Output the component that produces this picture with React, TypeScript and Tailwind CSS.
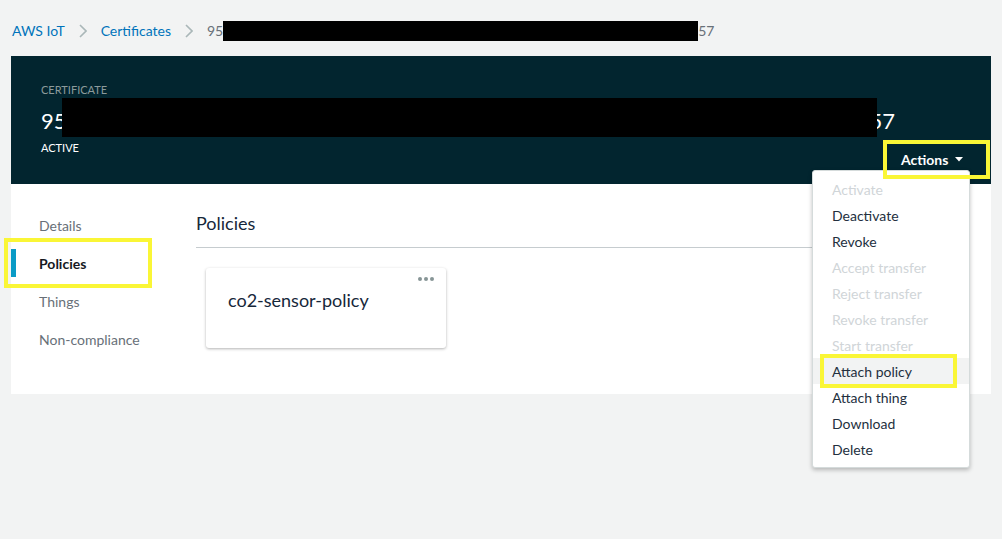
const menuItems = [
  { label: 'Activate', disabled: true },
  { label: 'Deactivate' },
  { label: 'Revoke' },
  { label: 'Accept transfer', disabled: true },
  { label: 'Reject transfer', disabled: true },
  { label: 'Revoke transfer', disabled: true },
  { label: 'Start transfer', disabled: true },
  { label: 'Attach policy', active: true },
  { label: 'Attach thing' },
  { label: 'Download' },
  { label: 'Delete' },
];

const navItems = ['Details', 'Policies', 'Things', 'Non-compliance'];

function Chevron() {
  return (
    <svg width="8" height="14" viewBox="0 0 8 14" className="mx-[14px]">
      <path d="M1 1l6 6-6 6" fill="none" stroke="#aab7b8" strokeWidth="1.6" />
    </svg>
  );
}

function ActionsMenu() {
  return (
    <div className="absolute right-[21px] top-[114px] z-10 w-[158px] rounded-[3px] border border-[#d5dbdb] bg-white py-[5px] shadow-[0_2px_4px_rgba(0,0,0,0.25)]">
      {menuItems.map((item) => (
        <div
          key={item.label}
          className={
            'relative flex h-[26px] items-center pl-[19px] text-[14px] ' +
            (item.disabled ? 'text-[#d0d5d8] ' : 'text-[#232f3e] ') +
            (item.active ? 'bg-[#f2f3f3]' : '')
          }
        >
          {item.label}
          {item.active && (
            <div className="absolute -bottom-[4px] -top-[4px] left-[7px] right-[12px] border-[4px] border-[#faf636]" />
          )}
        </div>
      ))}
    </div>
  );
}

export default function App() {
  return (
    <div className="h-[539px] w-[1002px] overflow-hidden bg-[#f2f3f3] font-['Lato',sans-serif]">
      {/* breadcrumb */}
      <div className="flex h-[56px] items-start pl-[12px] pt-[20px] text-[14px] leading-[22px]">
        <span className="text-[#0073bb]">AWS IoT</span>
        <span className="flex h-[22px] items-center"><Chevron /></span>
        <span className="text-[#0073bb]">Certificates</span>
        <span className="flex h-[22px] items-center"><Chevron /></span>
        <span className="text-[#687078]">95</span>
        <span className="mt-[1px] h-[20px] w-[475px] bg-black" />
        <span className="text-[#687078]">57</span>
      </div>

      <div className="relative mx-[11px]">
        {/* header */}
        <div className="flex h-[128px] items-end bg-[#02252f] pb-[5px] pl-[30px] pr-[1px]">
          <div className="min-w-0 flex-1 self-start whitespace-nowrap pt-[27px]">
            <div className="text-[11px] leading-[14px] text-[#8c9a9b]">CERTIFICATE</div>
            <div className="mt-[9px] flex h-[28px] items-center text-[22px] text-white">
              <span>95</span>
              <span className="relative z-10 ml-[-5px] mt-[-5px] h-[39px] w-[815px] shrink-0 bg-black" />
              <span className="ml-[-7px]">57</span>
            </div>
            <div className="mt-[7px] text-[11px] leading-[14px] text-white">ACTIVE</div>
          </div>
          <button className="relative z-20 flex h-[39px] w-[107px] shrink-0 items-center gap-[7px] border-[4px] border-[#faf636] pl-[14px] pb-[1px] text-[14px] font-bold text-white">
            Actions
            <svg width="8" height="5" viewBox="0 0 8 5">
              <path d="M0 0h8L4 4.5z" fill="white" />
            </svg>
          </button>
        </div>

        <ActionsMenu />

        {/* content panel */}
        <div className="flex h-[210px] bg-white">
          <nav className="w-[185px] pt-[22px]">
            {navItems.map((n) => (
              <div key={n} className="relative flex h-[38px] items-center pl-[28px] text-[14px]">
                {n === 'Policies' ? (
                  <>
                    <div className="absolute left-0 top-[5px] h-[28px] w-[5px] bg-[#0a9bc6]" />
                    <span className="font-bold text-[#16191f]">{n}</span>
                    <div className="absolute -left-[7px] -top-[6px] h-[50px] w-[148px] border-[4px] border-[#faf636]" />
                  </>
                ) : (
                  <span className="text-[#687078]">{n}</span>
                )}
              </div>
            ))}
          </nav>

          <div className="flex-1 pr-[29px] pt-[27px]">
            <h2 className="border-b border-[#c6cccf] pb-[12px] text-[18px] leading-[24px] text-[#16273a]">
              Policies
            </h2>
            <div className="ml-[10px] mt-[20px] flex h-[80px] w-[240px] flex-col rounded-[3px] bg-white px-[22px] pt-[9px] shadow-[0_1px_3px_rgba(0,0,0,0.3)]">
              <div className="flex justify-end">
                <span className="mr-[-10px] flex gap-[2px]">
                  <span className="h-[4px] w-[4px] rounded-full bg-[#879596]" />
                  <span className="h-[4px] w-[4px] rounded-full bg-[#879596]" />
                  <span className="h-[4px] w-[4px] rounded-full bg-[#879596]" />
                </span>
              </div>
              <div className="mt-[7px] text-[18px] leading-[24px] text-[#16273a]">co2-sensor-policy</div>
            </div>
          </div>
        </div>
      </div>
    </div>
  );
}
